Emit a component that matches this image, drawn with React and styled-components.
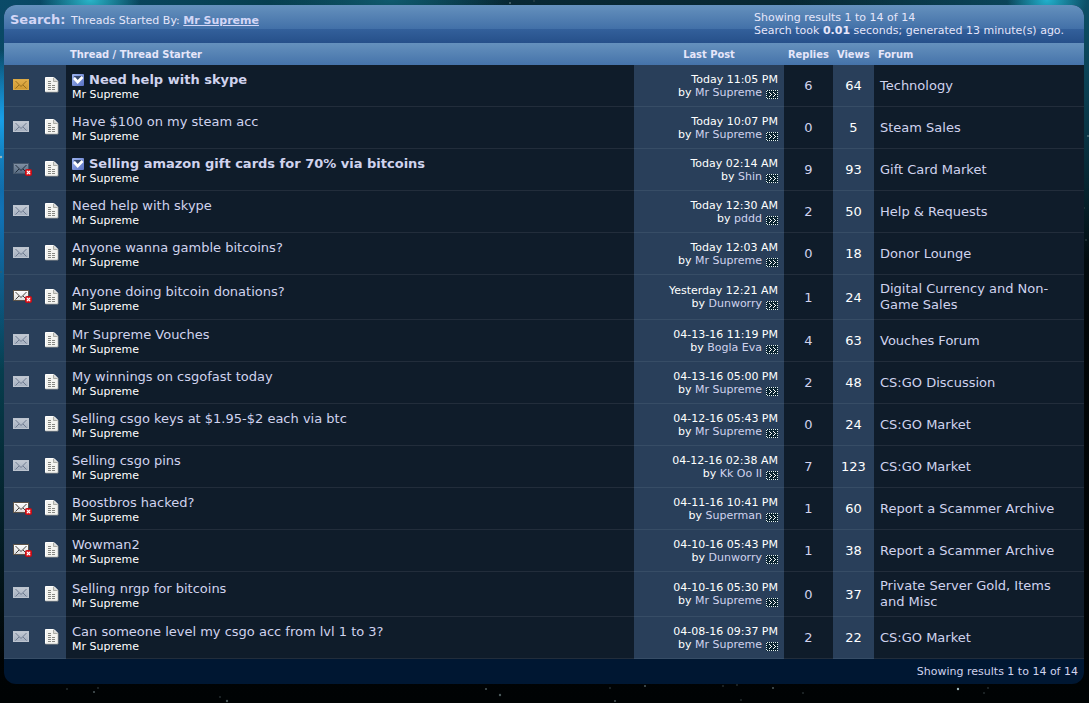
import React from "react";
import styled, { createGlobalStyle } from "styled-components";

const GlobalStyle = createGlobalStyle`
  * {
    box-sizing: border-box;
  }

  html {
    min-height: 100%;
    background: #000304;
  }

  body {
    margin: 0;
    min-height: 100vh;
    font-family: Verdana, "DejaVu Sans", sans-serif;
    font-size: 11px;
    line-height: 13px;
    color: #fff;
    background:
      radial-gradient(ellipse 50px 30px at 90px 0, #2ab4c8, transparent),
      radial-gradient(ellipse 120px 40px at 390px 0, #0f5a6e, transparent),
      radial-gradient(ellipse 40px 30px at calc(100% - 42px) 0, #22b0cc, transparent),
      radial-gradient(ellipse 60px 70px at 0 120px, #18a0ea, transparent),
      radial-gradient(ellipse 60px 160px at 0 210px, #1173b8, transparent),
      radial-gradient(ellipse 300px 260px at 100% 0, #0d5068, transparent),
      radial-gradient(ellipse 500px 660px at 0 0, #0a4a68, #073f50 55%, transparent),
      linear-gradient(#082833, #010608 45%, #000304);
    background-repeat: no-repeat;
  }
`;

const Page = styled.main`
  position: relative;
  padding: 5px 5px 19px 4px;
`;

const Sky = styled.svg`
  position: absolute;
  inset: 0;
  width: 100%;
  height: 100%;
`;

const Panel = styled.section`
  position: relative;
  overflow: hidden;
  border-radius: 12px;
  background: #001732;
`;

const Header = styled.header`
  display: flex;
  justify-content: space-between;
  height: 38px;
  padding: 6px;
  color: #e6e6fa;
  background: linear-gradient(#6591bd, #4270a8 24px, #33609b 24px, #26508a);
`;

const Title = styled.h1`
  margin: 0;
  font-size: 11px;
  font-weight: normal;
  line-height: 18px;

  strong {
    margin-right: 2px;
    font-size: 13px;
    color: #d3d6f6;
  }
`;

const Link = styled.a`
  color: ${(props) => props.color || "#d0d3ee"};
  font-weight: ${(props) => (props.$bold ? "bold" : "normal")};
  text-decoration: ${(props) => (props.$underline ? "underline" : "none")};

  &:hover {
    text-decoration: underline;
  }
`;

const Summary = styled.div`
  flex: 0 0 324px;
`;

const Table = styled.table`
  width: 100%;
  table-layout: fixed;
  border-collapse: separate;
  border-spacing: 0;
`;

const Col = styled.col`
  width: ${(props) => props.$width || "auto"};
`;

const Thead = styled.thead`
  background: linear-gradient(#6591bd, #4573aa);
`;

const Th = styled.th`
  height: 22px;
  padding: 0 4px;
  font-family: Tahoma, "DejaVu Sans Condensed", "DejaVu Sans", sans-serif;
  text-align: ${(props) => props.$align || "left"};
  white-space: nowrap;
  color: #e6e6fa;
`;

const Td = styled.td`
  padding: 6px;
  border-bottom: 1px solid ${(props) => (props.$alt ? "#374d66" : "#222d3b")};
  background: ${(props) => (props.$alt ? "#293f5a" : "#0f1c2a")};
  text-align: ${(props) => props.$align || "left"};
  vertical-align: middle;
`;

const IconTd = styled(Td)`
  padding: 0 6px 0 9px;

  svg {
    display: block;
  }
`;

const ThreadTd = styled(Td)`
  padding: 7px 6px 5px;
`;

const CountTd = styled(Td)`
  padding: 0;
  font-size: 13px;
  color: ${(props) => (props.$alt ? "#fff" : "#d0d3ee")};
`;

const ForumTd = styled(Td)`
  font-size: 13px;
  line-height: 16px;
`;

const ThreadTitle = styled.div`
  display: flex;
  align-items: center;
  gap: 5px;
  font-size: 13px;
  line-height: 16px;
`;

const GoTo = styled.a`
  display: inline-block;
  margin-left: 4px;
  vertical-align: -3px;

  svg {
    display: block;
  }
`;

const Footer = styled.footer`
  padding: 6px;
  height: 25px;
  text-align: right;
  color: #d0d3ee;
`;

const envelopes = {
  hot: { top: "#e3b04c", bottom: "#cf982f", border: "#dba945", line: "#8f681d" },
  old: { top: "#c3cad4", bottom: "#a4afbf", border: "#bcc4cf", line: "#66748a" },
  locked: { top: "#8292a5", bottom: "#566a81", border: "#46576b", line: "#172331" },
  unread: { top: "#fff", bottom: "#dcdcdc", border: "#5c5348", line: "#33302d" },
};

const Envelope = ({ type }) => {
  const c = envelopes[type];
  const closed = type === "locked" || type === "unread";

  return (
    <svg width="19" height="16" viewBox="0 0 19 16" role="img" aria-label={type + " thread"}>
      <defs>
        <linearGradient id={"env-" + type} x1="0" y1="0" x2="0" y2="1">
          <stop offset="0" stopColor={c.top} />
          <stop offset="1" stopColor={c.bottom} />
        </linearGradient>
      </defs>
      <rect x="0.5" y="1.5" width="15" height="10" fill={`url(#env-${type})`} stroke={c.border} />
      <path d="M2.5 3L8 8.5L13.5 3M2.5 10.5L6 7M13.5 10.5L10 7" fill="none" stroke={c.line} strokeWidth="0.9" />
      {closed && (
        <g>
          <rect x="12.5" y="7.5" width="6" height="6" rx="1" fill="#e0222a" stroke="#c30d15" />
          <path d="M14 9L17 12M17 9L14 12" stroke="#fff" strokeWidth="1.1" />
        </g>
      )}
    </svg>
  );
};

const PageIcon = () => (
  <svg width="14" height="17" viewBox="0 0 14 17" role="img" aria-label="Post">
    <path d="M0.5 0.5H9L12.5 4V14.5H0.5Z" fill="#f4f4f0" stroke="#fff" />
    <path d="M0.5 15H13V4" fill="none" stroke="#a5a69f" strokeWidth="0.8" />
    <path d="M8.5 0.5V4.5H12.5" fill="#d9d9d4" stroke="#9d9e98" strokeWidth="0.8" />
    <path d="M3 4.5H7M3 6.5H7M3 8.5H10.5M3 10.5H10.5M3 12.5H10.5" stroke="#878883" strokeDasharray="3 1" />
  </svg>
);

const CheckIcon = () => (
  <svg width="12" height="12" viewBox="0 0 12 12" role="img" aria-label="Solved">
    <defs>
      <linearGradient id="check" x1="0" y1="0" x2="1" y2="1">
        <stop offset="0" stopColor="#9db4ef" />
        <stop offset="1" stopColor="#5871c4" />
      </linearGradient>
    </defs>
    <rect width="12" height="12" rx="1" fill="url(#check)" />
    <path d="M1.5 2H10.5L6 6.5Z" fill="#35486d" />
    <path d="M2 4L5.7 8L10.5 3" fill="none" stroke="#fff" strokeWidth="2.6" />
  </svg>
);

const GoToIcon = () => (
  <svg width="12" height="9" viewBox="0 0 12 9" shapeRendering="crispEdges">
    <rect width="12" height="9" fill="#0a2431" />
    <path d="M1 0.5H12M1 8.5H12" stroke="#e6f2f2" strokeDasharray="1 1" />
    <path d="M0.5 1V9M11.5 0V9" stroke="#e6f2f2" strokeDasharray="1 1" />
    <path
      d="M3 2h1v1h-1zM4 3h1v1h-1zM5 4h1v1h-1zM4 5h1v1h-1zM3 6h1v1h-1zM7 2h1v1h-1zM8 3h1v1h-1zM9 4h1v1h-1zM8 5h1v1h-1zM7 6h1v1h-1z"
      fill="#fff"
    />
  </svg>
);

const stars = [
  [1, 157], [1, 272], [1086, 240], [1088, 136], [1084, 208], [534, 1], [510, 3],
  [500, 695], [610, 688], [615, 701], [67, 689], [98, 688], [94, 692], [220, 697],
  [227, 701], [486, 689], [723, 686], [737, 685], [773, 688], [741, 700], [803, 693],
  [958, 689], [984, 693], [988, 688], [645, 686],
];

const threads = [
  { icon: "hot", solved: true, title: "Need help with skype", date: "Today 11:05 PM", by: "Mr Supreme", replies: 6, views: 64, forum: "Technology" },
  { icon: "old", title: "Have $100 on my steam acc", date: "Today 10:07 PM", by: "Mr Supreme", replies: 0, views: 5, forum: "Steam Sales" },
  { icon: "locked", solved: true, title: "Selling amazon gift cards for 70% via bitcoins", date: "Today 02:14 AM", by: "Shin", replies: 9, views: 93, forum: "Gift Card Market" },
  { icon: "old", title: "Need help with skype", date: "Today 12:30 AM", by: "pddd", replies: 2, views: 50, forum: "Help & Requests" },
  { icon: "old", title: "Anyone wanna gamble bitcoins?", date: "Today 12:03 AM", by: "Mr Supreme", replies: 0, views: 18, forum: "Donor Lounge" },
  { icon: "unread", title: "Anyone doing bitcoin donations?", date: "Yesterday 12:21 AM", by: "Dunworry", replies: 1, views: 24, forum: "Digital Currency and Non-Game Sales" },
  { icon: "old", title: "Mr Supreme Vouches", date: "04-13-16 11:19 PM", by: "Bogla Eva", replies: 4, views: 63, forum: "Vouches Forum" },
  { icon: "old", title: "My winnings on csgofast today", date: "04-13-16 05:00 PM", by: "Mr Supreme", replies: 2, views: 48, forum: "CS:GO Discussion" },
  { icon: "old", title: "Selling csgo keys at $1.95-$2 each via btc", date: "04-12-16 05:43 PM", by: "Mr Supreme", replies: 0, views: 24, forum: "CS:GO Market" },
  { icon: "old", title: "Selling csgo pins", date: "04-12-16 02:38 AM", by: "Kk Oo Il", replies: 7, views: 123, forum: "CS:GO Market" },
  { icon: "unread", title: "Boostbros hacked?", date: "04-11-16 10:41 PM", by: "Superman", replies: 1, views: 60, forum: "Report a Scammer Archive" },
  { icon: "unread", title: "Wowman2", date: "04-10-16 05:43 PM", by: "Dunworry", replies: 1, views: 38, forum: "Report a Scammer Archive" },
  { icon: "old", title: "Selling nrgp for bitcoins", date: "04-10-16 05:30 PM", by: "Mr Supreme", replies: 0, views: 37, forum: "Private Server Gold, Items and Misc" },
  { icon: "old", title: "Can someone level my csgo acc from lvl 1 to 3?", date: "04-08-16 09:37 PM", by: "Mr Supreme", replies: 2, views: 22, forum: "CS:GO Market" },
];

const ThreadRow = ({ thread }) => (
  <tr>
    <IconTd $alt>
      <Envelope type={thread.icon} />
    </IconTd>
    <IconTd $alt>
      <PageIcon />
    </IconTd>
    <ThreadTd>
      <ThreadTitle>
        {thread.solved && <CheckIcon />}
        <Link href="#thread" $bold={thread.solved}>{thread.title}</Link>
      </ThreadTitle>
      <div>Mr Supreme</div>
    </ThreadTd>
    <Td $alt $align="right">
      <div>{thread.date}</div>
      <div>
        by <Link href="#member">{thread.by}</Link>
        <GoTo href="#last" aria-label="Go to last post">
          <GoToIcon />
        </GoTo>
      </div>
    </Td>
    <CountTd $align="center">{thread.replies}</CountTd>
    <CountTd $alt $align="center">{thread.views}</CountTd>
    <ForumTd>
      <Link href="#forum">{thread.forum}</Link>
    </ForumTd>
  </tr>
);

const App = () => {
  return (
    <>
      <GlobalStyle />
      <Page>
        <Sky aria-hidden="true">
          {stars.map(([x, y], i) => (
            <circle key={i} cx={x} cy={y} r={i % 7 === 0 ? 1.2 : 0.7} fill={i % 3 ? "#4a5a5c" : "#9fb8bb"} />
          ))}
        </Sky>
        <Panel>
          <Header>
            <Title>
              <strong>Search:</strong> Threads Started By:{" "}
              <Link href="#member" color="#d3d6f6" $bold $underline>Mr Supreme</Link>
            </Title>
            <Summary>
              <div>Showing results 1 to 14 of 14</div>
              <div>
                Search took <strong>0.01</strong> seconds; generated 13 minute(s) ago.
              </div>
            </Summary>
          </Header>
          <Table>
            <colgroup>
              <Col $width="32px" />
              <Col $width="30px" />
              <Col />
              <Col $width="150px" />
              <Col $width="49px" />
              <Col $width="41px" />
              <Col $width="210px" />
            </colgroup>
            <Thead>
              <tr>
                <Th as="td" />
                <Th as="td" />
                <Th>Thread / Thread Starter</Th>
                <Th $align="center">Last Post</Th>
                <Th>Replies</Th>
                <Th>Views</Th>
                <Th>Forum</Th>
              </tr>
            </Thead>
            <tbody>
              {threads.map((thread, i) => (
                <ThreadRow key={i} thread={thread} />
              ))}
            </tbody>
          </Table>
          <Footer>Showing results 1 to 14 of 14</Footer>
        </Panel>
      </Page>
    </>
  );
};

export default App;
